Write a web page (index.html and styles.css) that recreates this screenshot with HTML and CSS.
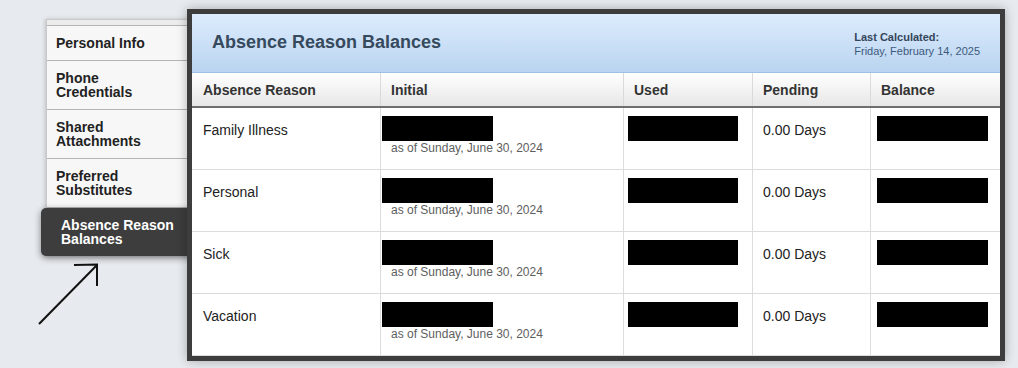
FILE: index.html
```html
<!DOCTYPE html>
<html>
<head>
<meta charset="utf-8">
<link rel="stylesheet" href="styles.css">
</head>
<body>
<div class="page">
  <div class="side">
    <div class="menu">
      <div class="menu-top"></div>
      <div class="menu-item first">Personal Info</div>
      <div class="menu-item">Phone<br>Credentials</div>
      <div class="menu-item">Shared<br>Attachments</div>
      <div class="menu-item">Preferred<br>Substitutes</div>
      <div class="menu-item active">Absence Reason<br>Balances</div>
    </div>
    <svg class="arrow" width="80" height="74" viewBox="0 0 80 74">
      <line x1="9" y1="68" x2="67" y2="9" stroke="#111" stroke-width="2"/>
      <polyline points="44,9 67,8.5 67,30" fill="none" stroke="#111" stroke-width="2"/>
    </svg>
  </div>
  <div class="main">
    <div class="head">
      <div class="title">Absence Reason Balances</div>
      <div class="calc">
        <div class="calc-label">Last Calculated:</div>
        <div class="calc-date">Friday, February 14, 2025</div>
      </div>
    </div>
    <div class="grid">
      <div class="row hrow">
        <div class="c c1">Absence Reason</div>
        <div class="c">Initial</div>
        <div class="c">Used</div>
        <div class="c">Pending</div>
        <div class="c">Balance</div>
      </div>
      <div class="row">
        <div class="c c1 txt">Family Illness</div>
        <div class="c"><div class="redact r2"></div><div class="asof">as of Sunday, June 30, 2024</div></div>
        <div class="c"><div class="redact r3"></div></div>
        <div class="c txt">0.00 Days</div>
        <div class="c"><div class="redact r5"></div></div>
      </div>
      <div class="row">
        <div class="c c1 txt">Personal</div>
        <div class="c"><div class="redact r2"></div><div class="asof">as of Sunday, June 30, 2024</div></div>
        <div class="c"><div class="redact r3"></div></div>
        <div class="c txt">0.00 Days</div>
        <div class="c"><div class="redact r5"></div></div>
      </div>
      <div class="row">
        <div class="c c1 txt">Sick</div>
        <div class="c"><div class="redact r2"></div><div class="asof">as of Sunday, June 30, 2024</div></div>
        <div class="c"><div class="redact r3"></div></div>
        <div class="c txt">0.00 Days</div>
        <div class="c"><div class="redact r5"></div></div>
      </div>
      <div class="row">
        <div class="c c1 txt">Vacation</div>
        <div class="c"><div class="redact r2"></div><div class="asof">as of Sunday, June 30, 2024</div></div>
        <div class="c"><div class="redact r3"></div></div>
        <div class="c txt">0.00 Days</div>
        <div class="c"><div class="redact r5"></div></div>
      </div>
    </div>
  </div>
</div>
</body>
</html>
```
FILE: styles.css
```css
* { box-sizing: border-box; }
html, body {
  margin: 0;
  padding: 0;
  background: #e7eaee;
  font-family: "Liberation Sans", Arial, sans-serif;
  color: #222;
}
.page {
  display: flex;
  align-items: flex-start;
  padding-top: 9px;
  height: 368px;
  overflow: hidden;
}
.side {
  margin-left: 46px;
  margin-top: 10px;
  width: 150px;
  flex: none;
  display: flex;
  flex-direction: column;
}
.menu {
  background: #f7f7f7;
  border-left: 1px solid #c8c8c8;
  box-shadow: -1px 0 4px rgba(0,0,0,0.18);
}
.menu-top {
  height: 7px;
  background: #ececec;
  border-top: 1px solid #c9c9c9;
  border-bottom: 1px solid #b4b4b4;
}
.menu-item {
  padding: 10px 10px 10px 9px;
  font-size: 14px;
  line-height: 14px;
  font-weight: bold;
  color: #222;
  border-bottom: 1px solid #b4b4b4;
}
.menu-item.first {
  padding-top: 10px;
  padding-bottom: 10px;
}
.menu-item.active {
  background: #3d3d3d;
  color: #fff;
  margin-left: -6px;
  padding-left: 20px;
  border-bottom: none;
  border-radius: 5px 0 0 5px;
  box-shadow: 0 2px 7px rgba(0,0,0,0.45);
}
.arrow {
  display: block;
  margin-left: -16px;
  margin-top: 0;
}
.main {
  position: relative;
  z-index: 2;
  margin-left: -9px;
  width: 818px;
  flex: none;
  border: 5px solid #3d3d3d;
  background: #fff;
  box-shadow: 0 0 10px rgba(0,0,0,0.28);
}
.head {
  height: 59px;
  border-bottom: 1px solid #9fc1e3;
  background: linear-gradient(#ddecfd, #b9d4f0);
  display: flex;
  align-items: center;
  justify-content: space-between;
  padding: 0 20px;
}
.title {
  font-size: 18px;
  font-weight: bold;
  color: #36495d;
  margin-top: -2px;
}
.calc {
  font-size: 11px;
  line-height: 14px;
  margin-top: 2px;
}
.calc-label {
  font-weight: bold;
  color: #34465a;
}
.calc-date {
  color: #3d5a7c;
}
.row {
  display: grid;
  grid-template-columns: 188px 243px 129px 118px 130px;
  height: 62px;
  border-bottom: 1px solid #dcdcdc;
}
.hrow {
  height: 35px;
  border-bottom: 2px solid #6e6e6e;
  background: linear-gradient(#ffffff, #e7e7e7);
}
.c {
  border-left: 1px solid #dcdcdc;
  padding: 8px 10px 0 10px;
  font-size: 14px;
}
.c1 {
  border-left: none;
  padding-left: 11px;
}
.hrow .c {
  font-weight: bold;
  color: #333;
  line-height: 18px;
  padding-top: 8px;
  border-left-color: #dadada;
}
.txt {
  padding-top: 13px;
  line-height: 18px;
}
.redact {
  height: 25px;
  width: 111px;
  background: #000;
}
.r2 { margin-left: -9px; }
.r3 { margin-left: -6px; width: 110px; }
.r5 { margin-left: -4px; }
.asof {
  font-size: 12px;
  line-height: 14px;
  color: #5e5e5e;
}
```
